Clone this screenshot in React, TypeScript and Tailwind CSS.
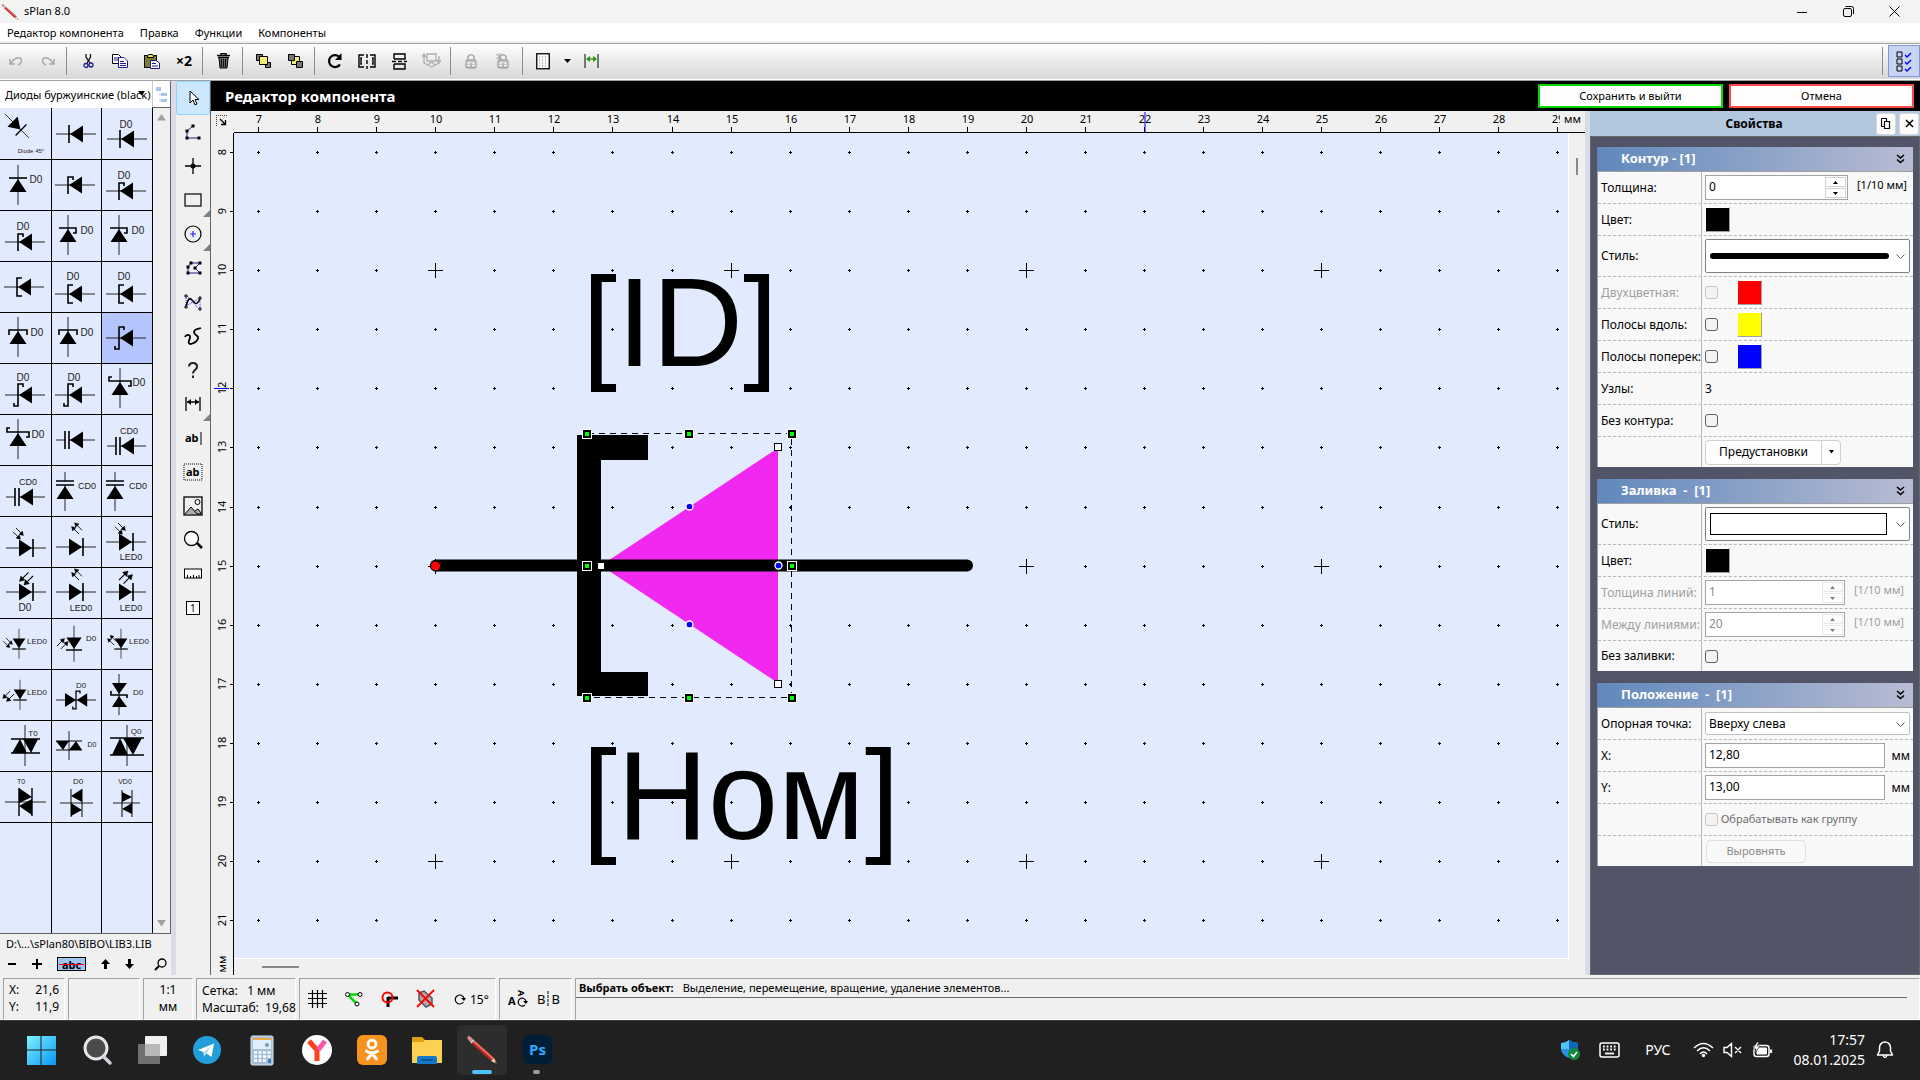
import React from "react";

type Kids = { children?: React.ReactNode };

/* ---------- component library symbols ---------- */

type Cathode = "bar" | "hook" | "bracket" | "schottky" | "cap";

const cathodes: Record<Cathode, string> = {
  bar: "M0 -9V9",
  hook: "M0 9V-8H5V-5",
  bracket: "M5 -9H0V9H5",
  schottky: "M5 -8V-11H0V11H-4V8",
  cap: "M0 -9V9M-4 -9V9",
};

function Diode({ x, y, r = 0, c = "bar", s = 1, lead = true }: { x: number; y: number; r?: number; c?: Cathode; s?: number; lead?: boolean }) {
  return (
    <g transform={`translate(${x} ${y}) rotate(${r}) scale(${s})`}>
      {lead && <path d={c === "cap" ? "M-13 0H-4M0 0H26" : "M-13 0H27"} stroke="#222" strokeWidth="1" />}
      <path d="M1 0L14 -8.5V8.5Z" fill="#000" />
      <path d={cathodes[c]} stroke="#000" strokeWidth="1.6" fill="none" />
    </g>
  );
}

function Rays({ x, y, r = 0, s = 1 }: { x: number; y: number; r?: number; s?: number }) {
  return (
    <g transform={`translate(${x} ${y}) rotate(${r}) scale(${s})`} stroke="#000" strokeWidth="1.2">
      <path d="M0 0L8 -8M5 4L13 -4" />
      <path d="M10 -10L8.5 -4L4 -8.500ZM15 -6L13.500 0L9 -4.500Z" fill="#000" strokeWidth=".5" />
    </g>
  );
}

function T({ x, y, children, s }: { x: number; y: number; s?: number } & Kids) {
  return (
    <text x={x} y={y} fontSize={s ?? (children === "D0" ? 10 : 9)} textAnchor="middle" className="font-['Liberation_Sans',Arial,sans-serif]" fill="#222">
      {children}
    </text>
  );
}

const library: React.ReactNode[] = [
  <><Diode x={21} y={21} r={225} s={0.85} /><T x={31} y={44} s={6}>Diode 45°</T></>,
  <Diode x={17} y={25} />,
  <><Diode x={18} y={30} /><T x={24} y={19}>D0</T></>,

  <><Diode x={18} y={18} r={90} /><T x={36} y={23}>D0</T></>,
  <Diode x={16} y={25} c="hook" />,
  <><Diode x={17} y={31} c="hook" /><T x={22} y={19}>D0</T></>,

  <><Diode x={18} y={31} c="hook" /><T x={23} y={19}>D0</T></>,
  <><Diode x={16} y={17} r={90} c="hook" /><T x={35} y={23}>D0</T></>,
  <><Diode x={17} y={17} r={90} c="hook" /><T x={36} y={23}>D0</T></>,

  <Diode x={17} y={25} c="bracket" />,
  <><Diode x={16} y={32} c="bracket" /><T x={21} y={18}>D0</T></>,
  <><Diode x={17} y={32} c="bracket" /><T x={22} y={18}>D0</T></>,

  <><Diode x={18} y={17} r={90} c="bracket" /><T x={37} y={23}>D0</T></>,
  <><Diode x={16} y={17} r={90} c="bracket" /><T x={35} y={23}>D0</T></>,
  <Diode x={17} y={25} c="schottky" />,

  <><Diode x={18} y={31} c="schottky" /><T x={23} y={17}>D0</T></>,
  <><Diode x={16} y={31} c="schottky" /><T x={22} y={17}>D0</T></>,
  <><Diode x={18} y={17} r={90} c="schottky" /><T x={37} y={22}>D0</T></>,

  <><Diode x={18} y={17} r={90} c="schottky" /><T x={38} y={23}>D0</T></>,
  <Diode x={17} y={25} c="cap" />,
  <><Diode x={18} y={31} c="cap" /><T x={27} y={19}>CD0</T></>,

  <><Diode x={19} y={31} c="cap" /><T x={28} y={19}>CD0</T></>,
  <><Diode x={13} y={19} r={90} c="cap" /><T x={35} y={23}>CD0</T></>,
  <><Diode x={13} y={19} r={90} c="cap" /><T x={36} y={23}>CD0</T></>,

  <><Diode x={33} y={31} r={180} /><Rays x={16} y={11} r={90} s={0.75} /></>,
  <><Diode x={31} y={30} r={180} /><Rays x={27} y={17} r={-90} s={0.75} /></>,
  <><Diode x={31} y={25} r={180} /><Rays x={16} y={6} r={90} s={0.75} /><T x={29} y={43}>LED0</T></>,

  <><Diode x={33} y={24} r={180} /><Rays x={33} y={8} r={180} s={0.9} /><T x={25} y={43}>D0</T></>,
  <><Diode x={31} y={24} r={180} /><Rays x={27} y={12} r={-90} s={0.75} /><T x={29} y={43}>LED0</T></>,
  <><Diode x={31} y={24} r={180} /><Rays x={17} y={12} s={0.9} /><T x={29} y={43}>LED0</T></>,

  <><Diode x={19} y={30} r={-90} s={0.75} /><Rays x={6} y={19} r={90} s={0.65} /><T x={37} y={25} s={8}>LED0</T></>,
  <><Diode x={22} y={31} r={-90} s={0.9} /><Rays x={5} y={27} s={0.75} /><T x={39} y={22} s={8}>D0</T></>,
  <><Diode x={19} y={30} r={-90} s={0.75} /><Rays x={12} y={26} r={-90} s={0.65} /><T x={37} y={25} s={8}>LED0</T></>,

  <><Diode x={20} y={30} r={-90} s={0.75} /><Rays x={14} y={24} r={180} s={0.75} /><T x={37} y={25} s={8}>LED0</T></>,
  <><path d="M4 30H44" stroke="#222" /><Diode x={24} y={30} s={0.8} lead={false} c="schottky" /><path d="M24 30L13 23V37Z" /><T x={29} y={18} s={8}>D0</T></>,
  <><path d="M17 4V45" stroke="#222" /><path d="M9 21V25H25V28" stroke="#000" strokeWidth="1.6" fill="none" /><path d="M10 13H25L17 24ZM10 37H25L17 26Z" /><T x={36} y={25} s={8}>D0</T></>,

  <><path d="M25 4V45" stroke="#222" /><path d="M11 18H40M11 32H40" stroke="#000" strokeWidth="1.4" /><path d="M12 32L20 18L27 32ZM23 18H38L31 32Z" /><T x={33} y={15} s={8}>T0</T></>,
  <><path d="M17 10V39" stroke="#222" /><path d="M4 20H30M4 29H30" stroke="#000" /><path d="M4 20H17L11 29ZM17 29L24 20L30 29Z" /><T x={40} y={26} s={7}>D0</T></>,
  <><path d="M25 4V45" stroke="#222" /><path d="M8 17H42M8 34H42" stroke="#000" strokeWidth="1.6" /><path d="M10 34L18 17L26 34ZM21 17H40L31 34Z" /><T x={34} y={13} s={8}>Q0</T></>,

  <><path d="M5 30H46" stroke="#222" /><path d="M19 16V44M32 16V44" stroke="#000" strokeWidth="1.4" /><path d="M19 16L32 25L19 31ZM32 27L19 34L32 43Z" /><T x={21} y={12} s={7}>T0</T></>,
  <><path d="M8 31H41" stroke="#222" /><path d="M19 17V45M30 17V45" stroke="#000" /><path d="M30 17L19 24L30 30ZM19 31L30 38L19 44Z" /><T x={26} y={12} s={8}>D0</T></>,
  <><path d="M11 31H38" stroke="#222" /><path d="M20 18V45M30 18V45" stroke="#000" /><path d="M20 20L30 25L20 30ZM30 31L20 37L30 42Z" /><T x={23} y={12} s={7}>VD0</T></>,
];

function LibraryPanel() {
  return (
    <aside className="flex w-[171px] shrink-0 flex-col bg-[#f0f0f0]">
      <div className="flex h-[27px] shrink-0 border-b border-r border-[#646464] bg-white">
        <div className="relative w-[153px] border-r border-[#c8c8c8]">
          <select aria-label="Библиотека" className="h-full w-full appearance-none overflow-hidden bg-white pl-[5px] text-[11px] whitespace-nowrap outline-none">
            <option>Диоды буржуинские (black)</option>
          </select>
          <svg className="pointer-events-none absolute top-[10px] left-[138px]" width="7" height="5"><path d="M0 0H7L3.500 4.500Z" /></svg>
        </div>
        <button aria-label="Дерево библиотек" className="flex flex-1 items-center justify-center">
          <svg width="11" height="15" fill="#a5c5ea"><path d="M0 0H5V4H0ZM5 6H11V9H5ZM5 12H11V15H5ZM2 4H3V14H5V13H3V8H5V7H3V4Z" /></svg>
        </button>
      </div>
      <div className="flex min-h-0 flex-1 border-r border-b border-[#646464]">
        <div className="grid w-[153px] grid-cols-[52px_50px_51px] grid-rows-[52px_repeat(13,51px)_1fr] bg-[#e2ebfd]">
          {library.map((sym, i) => (
            <button key={i} aria-label={`Компонент ${i + 1}`} className={`overflow-hidden border-r border-b border-black ${i === 14 ? "bg-[#b4c4fc]" : "bg-[#e2ebfd]"}`}>
              <svg width="50" height="50" className="block">{sym}</svg>
            </button>
          ))}
          <div className="border-r border-black" />
          <div className="border-r border-black" />
          <div className="border-r border-black" />
        </div>
        <div className="flex flex-1 flex-col items-center justify-between pt-[6px] pb-[6px]">
          <svg width="9" height="7" fill="#a0a0a0"><path d="M0 6.500H9L4.500 0Z" /></svg>
          <svg width="9" height="7" fill="#a0a0a0"><path d="M0 0H9L4.500 6.500Z" /></svg>
        </div>
      </div>
      <div className="h-[20px] shrink-0 pl-[6px] text-[11px] leading-[20px] whitespace-nowrap">D:\...\sPlan80\BIBO\LIB3.LIB</div>
      <div className="flex h-[21px] shrink-0 items-center gap-[15px] pr-[4px] pb-px pl-[7px]">
        <button aria-label="Удалить"><svg width="10" height="10"><path d="M1 5H9" stroke="#000" strokeWidth="2" /></svg></button>
        <button aria-label="Добавить"><svg width="10" height="10"><path d="M0 5H10M5 0V10" stroke="#000" strokeWidth="2" /></svg></button>
        <button className="relative h-[14px] w-[29px] border border-black bg-[#a0c4f0] text-[11px] leading-[11px] font-bold">
          abc
          <span className="absolute top-[6px] left-px h-px w-[25px] bg-red-600" />
        </button>
        <button aria-label="Вверх"><svg width="9" height="10"><path d="M4.500 0L9 5H6V10H3V5H0Z" /></svg></button>
        <button aria-label="Вниз"><svg width="9" height="10"><path d="M4.500 10L9 5H6V0H3V5H0Z" /></svg></button>
        <button aria-label="Поиск" className="ml-auto"><svg width="13" height="13" fill="none" stroke="#000"><circle cx="8" cy="5" r="4" strokeWidth="1.300" /><path d="M5 8L1 12" strokeWidth="2" /></svg></button>
      </div>
    </aside>
  );
}

/* ---------- top bars ---------- */

function Pencil({ size }: { size: number }) {
  return (
    <svg width={size} height={size} viewBox="0 0 32 32">
      <path d="M1 4L3 1.500L7 5L4 8Z" fill="#d88a8a" />
      <path d="M4 8L7 5L9 7L6 10Z" fill="#c8c8c8" />
      <path d="M5.500 9.500L8.500 6.500L28 24L25 27Z" fill="#b02824" />
      <path d="M7 8L8.500 6.500L28 24L26.500 25.500Z" fill="#ec6a5c" />
      <path d="M25 27L28 24L31 30Z" fill="#f0d0a0" />
      <path d="M29 28.500L30 27.500L31 30Z" fill="#222" />
    </svg>
  );
}

function TitleBar() {
  return (
    <header className="flex h-[23px] shrink-0 items-center bg-[#f3f3f3] pr-[3px] pl-px">
      <Pencil size={18} />
      <span className="ml-[5px] text-[11px]">sPlan 8.0</span>
      <div className="ml-auto flex h-full items-center">
        <button aria-label="Свернуть" className="flex h-full w-[46px] items-center justify-center"><svg width="10" height="10"><path d="M0 5.500H10" stroke="#000" /></svg></button>
        <button aria-label="Развернуть" className="flex h-full w-[46px] items-center justify-center"><svg width="11" height="11" fill="none" stroke="#000"><rect x=".5" y="2.500" width="8" height="8" rx="1.500" /><path d="M2.500 .5H8.500A2 2 0 0 1 10.500 2.500V8" /></svg></button>
        <button aria-label="Закрыть" className="flex h-full w-[46px] items-center justify-center"><svg width="11" height="11"><path d="M.5 .5L10.500 10.500M10.500 .5L.5 10.500" stroke="#000" /></svg></button>
      </div>
    </header>
  );
}

function MenuBar() {
  return (
    <nav className="flex h-[20px] shrink-0 items-start gap-[16px] border-b-2 border-[#efefef] bg-white pl-[7px] text-[11px] leading-[19px]">
      <button>Редактор компонента</button>
      <button>Правка</button>
      <button>Функции</button>
      <button>Компоненты</button>
    </nav>
  );
}

function Tool({ w = 32, label, children }: { w?: number; label: string } & Kids) {
  return (
    <button aria-label={label} title={label} className="flex h-[28px] shrink-0 items-center justify-center" style={{ width: w }}>
      {children}
    </button>
  );
}
const Sep = () => <span className="h-[28px] w-px shrink-0 bg-[#8c8c8c]" />;

function Toolbar() {
  return (
    <div className="flex h-[38px] shrink-0 items-center border-t border-b border-[#a0a0a0] bg-linear-to-b from-white to-[#d6d6d6] pb-[2px] shadow-[0_-1px_0_#fff_inset]">
      <Tool label="Отменить"><svg width="14" height="10" fill="none" stroke="#a8a8a8" strokeWidth="1.500"><path d="M1 3V8H6M1 8L5 3.500Q8 .5 12 2.500Q14 6 9 9" /></svg></Tool>
      <Tool label="Повторить"><svg width="14" height="10" fill="none" stroke="#a8a8a8" strokeWidth="1.500"><path d="M13 3V8H8M13 8L9 3.500Q6 .5 2 2.500Q0 6 5 9" /></svg></Tool>
      <span className="w-[2px]" />
      <Sep />
      <span className="w-[5px]" />
      <Tool label="Вырезать"><svg width="11" height="15" fill="none"><path d="M3 0V3L7 9M7.500 0V3L4 9" stroke="#000" strokeWidth="1.200" /><circle cx="3" cy="11.500" r="2" stroke="#1c1c90" strokeWidth="1.300" /><circle cx="8" cy="11" r="2" stroke="#1c1c90" strokeWidth="1.300" /></svg></Tool>
      <Tool label="Копировать"><svg width="16" height="14" strokeWidth="1"><path d="M.5 .5H6.500L9.500 3.500V9.500H.5Z" fill="#fff" stroke="#000" /><path d="M2 4H7M2 6H7" stroke="#1c1c90" /><path d="M6.500 3.500H12L15.500 7V13.500H6.500Z" fill="#fff" stroke="#1c1c90" /><path d="M8 7.500H12M8 9.500H14M8 11.500H14" stroke="#1c1c90" /></svg></Tool>
      <Tool label="Вставить"><svg width="16" height="15"><rect x=".5" y="1.500" width="12" height="12" fill="#807a30" stroke="#000" /><path d="M3.500 3.500V1.500L5 .5H8L9.500 1.500V3.500Z" fill="#e8e060" stroke="#000" /><path d="M6.500 6.500H12L15.500 9V14.500H6.500Z" fill="#fff" stroke="#1c1c90" /><path d="M8 9.500H12M8 12H14" stroke="#1c1c90" /></svg></Tool>
      <Tool label="Дублировать"><span className="text-[14px] leading-[20px] font-bold">×2</span></Tool>
      <span className="w-[2px]" />
      <Sep />
      <span className="w-[4px]" />
      <Tool label="Удалить"><svg width="13" height="16" fill="none" stroke="#000"><path d="M4 2V.5H9V2M0 2.500H13M1 4.500H12" strokeWidth="1.400" /><path d="M2 5L3 15H10L11 5" fill="#666" /><path d="M4.500 6V14M6.500 6V14M8.500 6V14" stroke="#111" /></svg></Tool>
      <span className="w-[3px]" />
      <Sep />
      <span className="w-[5px]" />
      <Tool label="На передний план"><svg width="16" height="15" stroke="#000"><path d="M.5 .5H6.500V6.500H.5ZM9.500 8.500H14.500V13.500H9.500Z" fill="#777" /><path d="M3.500 2.500H11.500V10.500H3.500Z" fill="#f6ee70" /></svg></Tool>
      <Tool label="На задний план"><svg width="16" height="15" stroke="#000"><path d="M3.500 2.500H11.500V10.500H3.500Z" fill="#f6ee70" /><path d="M.5 .5H6.500V6.500H.5ZM8.500 7.500H14.500V13.500H8.500Z" fill="#777" /></svg></Tool>
      <span className="w-[2px]" />
      <Sep />
      <span className="w-[4px]" />
      <Tool label="Повернуть"><svg width="16" height="16" fill="none"><path d="M12 3.500A6 6 0 1 0 13 11.500" stroke="#000" strokeWidth="2.200" /><path d="M14.500 0V7H8Z" fill="#000" /></svg></Tool>
      <Tool label="Отразить по горизонтали"><svg width="18" height="15" fill="none" stroke="#000" strokeWidth="1.400"><path d="M6 1H1V13H6M4 4H3V10H4M12 1H17V13H12M14 4H15V10H14" /><path d="M9 0V15" strokeDasharray="4 2" /></svg></Tool>
      <Tool label="Отразить по вертикали"><svg width="15" height="17" fill="none" stroke="#000" strokeWidth="1.400"><path d="M2 6V1H13V6H2M2 11V16H13V11H2" /><path d="M0 8.500H15" strokeDasharray="4 2" /></svg></Tool>
      <Tool label="Выровнять"><svg width="19" height="16" fill="none" stroke="#b0b0b0" strokeWidth="1.400"><path d="M5 1H14V8H5ZM2 10L9.500 14L17 10M2 3V10M0 4L2 1L4 4M17 3V9M15 7L17 10L19 7M6 12L9.500 9L13 12" /></svg></Tool>
      <span className="w-[3px]" />
      <Sep />
      <span className="w-[4px]" />
      {["Заблокировать", "Разблокировать"].map((l, i) => (
        <Tool key={l} label={l}>
          <svg width="15" height="17" fill="none" stroke="#a8a8a8">
            <path d="M4 7V3.500Q7 0 10 3.500V7" strokeWidth="1.600" />
            <rect x="2" y="7" width="10" height="8" rx="2" fill="#c4c4c4" strokeWidth="1.400" />
            <path d="M3 10H11M3 12.500H11" stroke="#fff" />
            <path d="M7 10V14" strokeWidth="1.500" />
            {i === 1 && <path d="M0 1L6 6M6 1L0 6M3 0V7" />}
          </svg>
        </Tool>
      ))}
      <span className="w-[3px]" />
      <Sep />
      <span className="w-[4px]" />
      <Tool label="Сетка"><svg width="14" height="17"><rect x=".75" y=".75" width="12.500" height="15" fill="#fff" stroke="#000" strokeWidth="1.300" /><path d="M3 4H12M3 7H12M3 10H12M3 13H12" stroke="#777" strokeDasharray="1 2" /></svg></Tool>
      <Tool w={17} label="Параметры сетки"><svg width="7" height="4"><path d="M0 0H7L3.500 4Z" /></svg></Tool>
      <Tool w={30} label="Размеры"><svg width="15" height="14"><path d="M1 0V14M14 0V14" stroke="#000" /><path d="M3 5H12" stroke="#d00" /><path d="M2 5L6 2V8ZM13 5L9 2V8Z" fill="#0a0" /></svg></Tool>
      <span className="ml-auto" />
      <Sep />
      <button aria-label="Панель свойств" className="ml-[5px] flex h-[32px] w-[32px] items-center justify-center border border-[#7898e0] bg-[#c8d4f0]">
        <svg width="16" height="21" fill="none"><path d="M1 1H6V6H1ZM1 8H6V13H1ZM1 15H6V20H1Z" stroke="#000" /><path d="M9 4L11 6L15 2M9 11L11 13L15 9M9 18L11 20L15 16" stroke="#00f" strokeWidth="1.400" /></svg>
      </button>
    </div>
  );
}

/* ---------- drawing tools ---------- */

const nodeSquares = (pts: [number, number][]) => pts.map(([x, y], i) => <rect key={i} x={x - 1.5} y={y - 1.5} width="3" height="3" fill="#000" />);

const tools: { label: string; more?: boolean; icon: React.ReactNode }[] = [
  { label: "Выбор", icon: <path d="M7 3V15L10 12L12 17L14 16L12 11.500H16Z" fill="#fff" stroke="#000" /> },
  { label: "Линия", icon: <><path d="M3 16H17M10 4L4 9V16" stroke="#1c1c90" fill="none" />{nodeSquares([[10, 4], [4, 9], [4, 16], [16, 16]])}</> },
  { label: "Узел", icon: <><path d="M2 10H18M10 2V18" stroke="#000" strokeWidth="1.300" /><circle cx="10" cy="10" r="2.500" /></> },
  { label: "Прямоугольник", more: true, icon: <rect x="2" y="4" width="16" height="12" fill="none" stroke="#000" strokeWidth="1.200" /> },
  { label: "Окружность", more: true, icon: <><circle cx="10" cy="10" r="8" fill="none" stroke="#000" strokeWidth="1.200" /><path d="M7 10H13M10 7V13" stroke="#22f" strokeWidth="1.200" /></> },
  { label: "Многоугольник", icon: <><path d="M8 5H17L12 10L17 15H5V9Z" stroke="#1c1c90" fill="none" />{nodeSquares([[8, 5], [17, 5], [12, 10], [17, 15], [5, 15], [5, 9]])}</> },
  { label: "Безье", icon: <><path d="M3 4V14L17 6V17M4 4L16 17" stroke="#22f" strokeDasharray="1 1" fill="none" /><path d="M3 15Q5 5 8 7L12 11Q14 13 17 7" stroke="#000" fill="none" strokeWidth="1.600" /><path d="M2 3H4V5H2ZM2 14H4V16H2ZM16 5H18V7H16ZM16 16H18V18H16Z" fill="#fff" stroke="#000" /></> },
  { label: "Свободная линия", icon: <path d="M2 11C3 8 8 8 7 12C5 16 5 18 8 18C12 17 16 14 15 11C14 9 11 9 11 6C11 3 15 3 18 2" fill="none" stroke="#000" strokeWidth="1.800" /> },
  { label: "Спецформа", icon: <path d="M6 6.500Q6 3 10 3Q14 3 14 6.500Q14 8.500 12 10Q10 11.500 10 13.500M10 15.500V18" stroke="#222" strokeWidth="2" fill="none" /> },
  { label: "Размер", more: true, icon: <><path d="M3 3V17M17 3V17M4 8H16" stroke="#000" strokeWidth="1.300" /><path d="M4 8L8 5V11ZM16 8L12 5V11Z" /></> },
  { label: "Текст", icon: <><text x="2" y="14" fontSize="11" fontWeight="700">ab</text><path d="M18 4V17" stroke="#000" /></> },
  { label: "Текстовый блок", icon: <><rect x="1" y="2" width="18" height="16" fill="none" stroke="#000" strokeDasharray="1 1" /><text x="3" y="14" fontSize="11" fontWeight="700">ab</text></> },
  { label: "Изображение", icon: <><rect x="1" y="1" width="18" height="18" fill="none" stroke="#000" strokeWidth="1.300" /><circle cx="14.500" cy="6" r="2.500" fill="none" stroke="#000" /><path d="M2 18L8 11L14 18M12 15L15 13L18 17V18H14" fill="#aaa" stroke="#000" /></> },
  { label: "Масштаб", icon: <><circle cx="8.500" cy="8.500" r="7" fill="#fff" stroke="#000" strokeWidth="1.300" /><path d="M14 13L19 18" stroke="#000" strokeWidth="2.500" /></> },
  { label: "Линейка", icon: <><rect x="1.500" y="5" width="17" height="9" fill="#fff" stroke="#000" /><path d="M4.500 14V11M7.500 14V12M10.500 14V11M13.500 14V12M16 14V11" stroke="#000" /></> },
  { label: "Страница", icon: <><rect x="3.500" y="3.500" width="13" height="13" fill="#fff" stroke="#000" /><text x="7" y="14" fontSize="10">1</text></> },
];

function ToolBox() {
  return (
    <div className="flex w-[35px] shrink-0 flex-col border-r border-[#646464] bg-[#f0f0f0]">
      {tools.map((t, i) => (
        <button key={t.label} aria-label={t.label} className={`relative flex h-[34px] shrink-0 items-center justify-center ${i === 0 ? "rounded-xs border border-[#99d1ff] bg-[#cce8ff]" : ""}`}>
          <svg width="20" height="20" viewBox="0 0 20 20">{t.icon}</svg>
          {t.more && <svg className="absolute right-0 bottom-0" width="7" height="7"><path d="M7 0V7H0Z" fill="#808080" /></svg>}
        </button>
      ))}
    </div>
  );
}

/* ---------- rulers and canvas ---------- */

const PITCH = 59.06;
const gx = (n: number) => Math.floor(24.6 + PITCH * (n - 7));
const gy = (n: number) => Math.floor(19.65 + PITCH * (n - 8));
const xs = Array.from({ length: 23 }, (_, i) => i + 7);
const ys = Array.from({ length: 14 }, (_, i) => i + 8);

function TopRuler() {
  return (
    <div className="flex h-[22px] shrink-0">
      <div className="w-[23px] shrink-0">
        <svg width="23" height="21" fill="none" stroke="#000"><path d="M5 4.500H17M5.500 6V16" strokeDasharray="1 1" stroke="#444" /><path d="M9 8L14 13M14.500 9V13.500H10" strokeWidth="1.300" /></svg>
      </div>
      <div className="flex min-w-0 flex-1 border-b border-black">
        <svg className="block h-full min-w-0 flex-1" fontSize="11">
          {xs.map((n) => (
            <React.Fragment key={n}>
              <path d={`M${gx(n) + 0.5} 16V22`} stroke="#000" />
              <text x={gx(n) + 1} y="12" textAnchor="middle">{n}</text>
            </React.Fragment>
          ))}
          <path d="M911 1V21" stroke="#00f" />
        </svg>
        <span className="w-[25px] shrink-0 pl-[4px] text-[11px] leading-[16px]">мм</span>
      </div>
    </div>
  );
}

function LeftRuler() {
  return (
    <div className="w-[23px] shrink-0 border-r border-black">
      <svg className="block h-full w-full" fontSize="11">
        {ys.map((n) => (
          <React.Fragment key={n}>
            <path d={`M19 ${gy(n) + 0.5}H23`} stroke="#000" />
            <text transform={`translate(15 ${gy(n)}) rotate(-90)`} textAnchor="middle">{n}</text>
          </React.Fragment>
        ))}
        <path d="M3 255.500H18" stroke="#00f" />
        <text transform="translate(15 831) rotate(-90)" textAnchor="middle">мм</text>
      </svg>
    </div>
  );
}

const grips: [number, number][] = [[353, 301], [455, 301], [558, 301], [353, 433], [558, 433], [353, 565], [455, 565], [558, 565]];
const vertices: [number, number][] = [[544, 314], [544, 551], [367, 433]];
const midpoints: [number, number][] = [[455, 373], [455, 491], [544, 432]];

function Canvas() {
  return (
    <svg className="block h-full w-full bg-[#e2ebfd]">
      <g className="font-['Liberation_Sans',Arial,sans-serif]" fontSize="126">
        <text x="348" y="233">[ID]</text>
        <text x="348" y="706">[Ном]</text>
      </g>
      <g stroke="#000" shapeRendering="crispEdges">
        {xs.map((n) =>
          ys.map((m) => {
            const big = n % 5 === 0 && m % 5 === 0;
            const r = big ? 7 : 1;
            const x = gx(n) + 0.5;
            const y = gy(m) + 0.5;
            return <path key={`${n}-${m}`} d={`M${x - r - 0.5} ${y}H${x + r + 0.5}M${x} ${y - r - 0.5}V${y + r + 0.5}`} />;
          }),
        )}
      </g>
      <path d="M367 432.500L544 315V550Z" fill="#f028f0" />
      <path d="M343 302H414V327H367V539H414V563H343Z" />
      <path d="M202 432.500H733" stroke="#000" strokeWidth="12" strokeLinecap="round" />
      <circle cx="201.500" cy="433" r="5" fill="#f00" stroke="#000" />
      <rect x="353.500" y="300.500" width="204" height="264" fill="none" stroke="#000" strokeDasharray="6 5" shapeRendering="crispEdges" />
      {grips.map(([x, y]) => (
        <g key={`${x}-${y}`} shapeRendering="crispEdges">
          <rect x={x - 5} y={y - 5} width="10" height="10" fill="#fff" />
          <rect x={x - 4} y={y - 4} width="8" height="8" />
          <rect x={x - 2} y={y - 2} width="4" height="4" fill="#0f0" />
        </g>
      ))}
      {vertices.map(([x, y]) => (
        <g key={`${x}-${y}`} shapeRendering="crispEdges">
          <rect x={x - 4} y={y - 4} width="8" height="8" />
          <rect x={x - 3} y={y - 3} width="6" height="6" fill="#fff" />
        </g>
      ))}
      {midpoints.map(([x, y]) => <circle key={`${x}-${y}`} cx={x + 0.5} cy={y + 0.5} r="3.500" fill="#00f" stroke="#fff" strokeWidth="1.300" />)}
    </svg>
  );
}

function Editor() {
  return (
    <main className="flex min-w-0 flex-1 flex-col bg-[#f0f0f0]">
      <TopRuler />
      <div className="flex min-h-0 flex-1">
        <LeftRuler />
        <div className="flex min-w-0 flex-1 flex-col">
          <div className="flex min-h-0 flex-1">
            <div className="min-w-0 flex-1 overflow-hidden border-r border-b border-white"><Canvas /></div>
            <div className="w-[16px] shrink-0 pt-[25px] pl-[7px]"><div className="h-[17px] w-[2px] bg-[#888]" /></div>
          </div>
          <div className="h-[16px] shrink-0 pt-[7px] pl-[28px]"><div className="h-[2px] w-[37px] bg-[#888]" /></div>
        </div>
      </div>
    </main>
  );
}

/* ---------- properties ---------- */

function Section({ title, children }: { title: string } & Kids) {
  return (
    <section className="bg-[#f8f8f8]">
      <h3 className="flex h-[24px] items-center justify-between bg-linear-to-r from-[#6088bc] to-[#b8bcd2] pr-[8px] pl-[24px] text-[13px] font-bold whitespace-pre text-white">
        {title}
        <button aria-label="Свернуть раздел">
          <svg width="9" height="10" fill="none" stroke="#000" strokeWidth="1.600"><path d="M1 1L4.500 4L8 1M1 5.500L4.500 8.500L8 5.500" /></svg>
        </button>
      </h3>
      <div className="border-t border-l border-[#a0a0a0]">{children}</div>
    </section>
  );
}

function Row({ label, id, off, last, h = "h-[32px]", children }: { label?: string; id?: string; off?: boolean; last?: boolean; h?: string } & Kids) {
  return (
    <div className={`flex ${h} ${last ? "" : "border-b border-dashed border-[#b8b8b8]"}`}>
      <div className="flex w-[104px] shrink-0 items-center border-r border-[#b8b8b8] pl-[3px]">
        <label htmlFor={id} className={`text-[12px] whitespace-nowrap ${off ? "text-[#a0a0a0]" : ""}`}>{label}</label>
      </div>
      <div className="flex min-w-0 flex-1 items-center pr-[3px] pl-[3px]">{children}</div>
    </div>
  );
}

function Check({ id, disabled }: { id: string; disabled?: boolean }) {
  return <input id={id} type="checkbox" disabled={disabled} className="h-[13px] w-[13px] shrink-0 appearance-none rounded-[3px] border border-[#606060] bg-[#f3f3f3] disabled:border-[#c6c6c6]" />;
}

const Swatch = ({ color, label, left }: { color: string; label: string; left?: boolean }) => (
  <button aria-label={label} className={`h-[25px] w-[25px] shrink-0 border-t border-l border-r border-b border-t-white border-l-white border-r-[#a0a0a0] border-b-[#a0a0a0] ${color} ${left ? "ml-[19px]" : ""}`} />
);

function Spin({ id, value, disabled }: { id: string; value: string; disabled?: boolean }) {
  const btn = "flex h-[10px] w-[21px] items-center justify-center border border-[#d0d0d0] bg-[#fdfdfd]";
  return (
    <>
      <div className="flex h-[25px] min-w-0 flex-1 items-center border border-[#a4a4a8] bg-white pr-px">
        <input id={id} defaultValue={value} disabled={disabled} className={`h-full min-w-0 flex-1 bg-transparent pb-[3px] pl-[3px] text-[12px] outline-none ${disabled ? "text-[#8c8c8c]" : ""}`} />
        <div className={`flex flex-col gap-px ${disabled ? "opacity-50" : ""}`}>
          <button aria-label="Больше" className={btn}><svg width="5" height="3"><path d="M0 3H5L2.500 0Z" /></svg></button>
          <button aria-label="Меньше" className={btn}><svg width="5" height="3"><path d="M0 0H5L2.500 3Z" /></svg></button>
        </div>
      </div>
      <span className={`shrink-0 pb-[4px] pl-[9px] text-[11px] whitespace-nowrap ${disabled ? "w-[65px] text-[#a0a0a0]" : "w-[62px]"}`}>[1/10 мм]</span>
    </>
  );
}

const Chevron = () => (
  <svg className="pointer-events-none absolute top-1/2 right-[5px] -mt-[2px]" width="9" height="6" fill="none" stroke="#606060"><path d="M.5 .5L4.500 4.500L8.500 .5" /></svg>
);

function StyleSelect({ id, text, children }: { id: string; text: string } & Kids) {
  return (
    <div className="relative flex-1">
      <select id={id} className="block h-[34px] w-full appearance-none rounded-xs border border-[#808080] bg-white pl-[4px] text-[12px] text-transparent"><option>{text}</option></select>
      <div className="pointer-events-none absolute inset-y-0 right-[21px] left-[5px] flex items-center">{children}</div>
      <Chevron />
    </div>
  );
}

function Properties() {
  const headBtn = "flex h-[22px] w-[20px] items-center justify-center rounded-[3px] border border-[#d8d8d8] bg-[#fdfdfd]";
  const field = "h-[25px] min-w-0 flex-1 border border-[#a4a4a8] bg-white pb-[3px] pl-[3px] text-[12px] outline-none";
  return (
    <aside className="flex w-[330px] shrink-0 flex-col">
      <div className="flex h-[25px] shrink-0 items-center bg-[#b3c7df] pr-px">
        <h2 className="flex-1 pl-[42px] text-center text-[12px] font-bold">Свойства</h2>
        <div className="flex gap-[3px]">
          <button aria-label="Открепить" className={headBtn}><svg width="10" height="12" fill="none" stroke="#000"><path d="M.5 .5H5.500V3.500M3.500 8.500H.5V.5M3.500 3.500H8.500V10.500H3.500Z" strokeWidth="1.200" /></svg></button>
          <button aria-label="Закрыть панель" className={headBtn}><svg width="9" height="9"><path d="M1 1L8 8M8 1L1 8" stroke="#000" strokeWidth="1.500" /></svg></button>
        </div>
      </div>
      <div className="flex min-h-0 flex-1 flex-col gap-[12px] border border-[#686868] bg-[#525467] pt-[10px] pr-[6px] pl-[6px]">
        <Section title="Контур - [1]">
          <Row label="Толщина:" id="thick"><Spin id="thick" value="0" /></Row>
          <Row label="Цвет:"><Swatch color="bg-black" label="Цвет контура" /></Row>
          <Row label="Стиль:" id="lstyle" h="h-[41px]"><StyleSelect id="lstyle" text="Сплошная"><span className="h-[6px] w-full rounded-full bg-black" /></StyleSelect></Row>
          <Row label="Двухцветная:" id="two" off><Check id="two" disabled /><Swatch color="bg-[#ff0000]" label="Второй цвет" left /></Row>
          <Row label="Полосы вдоль:" id="along"><Check id="along" /><Swatch color="bg-[#ffff00]" label="Цвет вдоль" left /></Row>
          <Row label="Полосы поперек:" id="across"><Check id="across" /><Swatch color="bg-[#0000ff]" label="Цвет поперек" left /></Row>
          <Row label="Узлы:"><span className="text-[12px]">3</span></Row>
          <Row label="Без контура:" id="nol"><Check id="nol" /></Row>
          <Row last h="h-[30px]">
            <button className="h-[25px] w-[117px] rounded-l-[4px] border border-[#d0d0d0] bg-[#fdfdfd] text-[12px]">Предустановки</button>
            <button aria-label="Список предустановок" className="-ml-px flex h-[25px] w-[20px] items-center justify-center rounded-r-[4px] border border-[#d0d0d0] bg-[#fdfdfd]"><svg width="5" height="4"><path d="M0 0H5L2.500 3.500Z" /></svg></button>
          </Row>
        </Section>
        <Section title="Заливка  -  [1]">
          <Row label="Стиль:" id="fstyle" h="h-[41px]"><StyleSelect id="fstyle" text="Сплошная"><span className="mr-[2px] h-[22px] w-full border border-black bg-white" /></StyleSelect></Row>
          <Row label="Цвет:"><Swatch color="bg-black" label="Цвет заливки" /></Row>
          <Row label="Толщина линий:" id="lt" off><Spin id="lt" value="1" disabled /></Row>
          <Row label="Между линиями:" id="lg" off><Spin id="lg" value="20" disabled /></Row>
          <Row label="Без заливки:" id="nof" last h="h-[30px]"><Check id="nof" /></Row>
        </Section>
        <Section title="Положение  -  [1]">
          <Row label="Опорная точка:" id="anchor">
            <div className="relative flex-1">
              <select id="anchor" className="block h-[23px] w-full appearance-none rounded-xs border border-[#c0c0c0] bg-white pl-[3px] text-[12px]"><option>Вверху слева</option></select>
              <Chevron />
            </div>
          </Row>
          <Row label="X:" id="px"><input id="px" className={field} defaultValue="12,80" /><span className="pl-[7px] text-[12px]">мм</span></Row>
          <Row label="Y:" id="py"><input id="py" className={field} defaultValue="13,00" /><span className="pl-[7px] text-[12px]">мм</span></Row>
          <Row><Check id="grp" disabled /><label htmlFor="grp" className="pl-[3px] text-[11px] text-[#6d6d6d]">Обрабатывать как группу</label></Row>
          <Row last h="h-[30px]"><button disabled className="ml-px h-[23px] w-[100px] rounded-[4px] border border-[#e0e0e0] bg-[#f8f8f8] text-[11px] text-[#8c8c8c]">Выровнять</button></Row>
        </Section>
      </div>
    </aside>
  );
}

/* ---------- status bar ---------- */

function Cell({ className, children }: { className: string } & Kids) {
  return <div className={`h-[42px] shrink-0 border-t border-l border-r border-b border-t-[#a0a0a0] border-l-[#a0a0a0] border-r-white border-b-white leading-[17px] ${className}`}>{children}</div>;
}

function StatusBar() {
  const ib = "flex h-[28px] w-[36px] items-center justify-center";
  return (
    <footer className="flex h-[45px] shrink-0 items-start gap-[3px] bg-[#f0f0f0] pt-[3px] pl-[3px] text-[12px]">
      <Cell className="w-[62px] px-[5px] py-[2px]">
        <div className="flex justify-between"><span>X:</span><span>21,6</span></div>
        <div className="flex justify-between"><span>Y:</span><span>11,9</span></div>
      </Cell>
      <Cell className="w-[72px]" />
      <Cell className="w-[50px] py-[2px] text-center"><div>1:1</div><div>мм</div></Cell>
      <Cell className="w-[100px] py-[3px] pl-[5px] whitespace-pre"><div>Сетка:   1 мм</div><div>Масштаб:  19,68</div></Cell>
      <Cell className="flex w-[197px] items-center">
        <button aria-label="Сетка" className={ib}><svg width="20" height="20"><path d="M4.500 1V19M9.500 1V19M14.500 1V19M0 4.500H19M0 9.500H19M0 14.500H19" stroke="#000" strokeWidth="1.200" /></svg></button>
        <button aria-label="Резиновые линии" className={ib}><svg width="18" height="15"><path d="M4 2.500H14M4 4L11 11" stroke="#0d0" strokeWidth="2.500" /><g fill="#fff" stroke="#000"><circle cx="2.500" cy="2.500" r="2" /><circle cx="15" cy="2.500" r="2" /><circle cx="12" cy="12" r="2" /></g></svg></button>
        <button aria-label="Захват узлов" className={ib}><svg width="18" height="17"><path d="M7 7H17M7 6V16" stroke="#000" strokeWidth="3" /><circle cx="6.500" cy="6.500" r="5" fill="none" stroke="#f00" strokeWidth="2" /></svg></button>
        <button aria-label="Привязка выключена" className={ib}><svg width="20" height="20" fill="none"><path d="M3 4L8 2L16 9V15L10 18L3 11Z" fill="#aaa" stroke="#555" strokeWidth="1.500" /><path d="M1 1L18 18M18 1L1 18" stroke="#f00" strokeWidth="1.800" /></svg></button>
        <button className="flex items-center gap-[4px] pl-[10px]"><svg width="12" height="12" fill="none"><path d="M9.500 9A4.500 4.500 0 1 1 10 5" stroke="#000" strokeWidth="1.200" /><path d="M7 5H12L10 8Z" fill="#000" /></svg>15°</button>
      </Cell>
      <Cell className="flex w-[73px] items-center">
        <button aria-label="Поворот текста" className={ib}>
          <svg width="22" height="20" fontSize="11" fontWeight="700"><text x="1" y="16">A</text><text transform="translate(11 1) rotate(90)" fontSize="9">A</text><path d="M18 16A4 4 0 1 1 19 12" fill="none" stroke="#000" strokeWidth="1.200" /><path d="M16 12H21L19 15Z" /></svg>
        </button>
        <button className="flex items-center gap-[2px] pl-px text-[13px]">B<svg width="2" height="16"><path d="M1 0V16" stroke="#000" strokeDasharray="3 1" /></svg>B</button>
      </Cell>
      <Cell className="min-w-0 flex-1 text-[11px]">
        <div className="mr-[12px] flex h-[19px] gap-[9px] border-b border-[#686868] pl-[3px] leading-[18px]">
          <b>Выбрать объект:</b><span>Выделение, перемещение, вращение, удаление элементов...</span>
        </div>
      </Cell>
    </footer>
  );
}

/* ---------- taskbar ---------- */

const apps: { name: string; state?: "active" | "open"; icon: React.ReactNode }[] = [
  { name: "Пуск", icon: <><defs><linearGradient id="win" x1="0" y1="0" x2="1" y2="1"><stop offset="0" stopColor="#7cf4fc" /><stop offset="1" stopColor="#0a94f8" /></linearGradient></defs><path d="M1 2H14.500V15.500H1ZM15.500 2H30V15.500H15.500ZM1 16.500H14.500V31H1ZM15.500 16.500H30V31H15.500Z" fill="url(#win)" /></> },
  { name: "Поиск", icon: <><circle cx="15" cy="14" r="11" fill="#4a4a4a" stroke="#e4e8ea" strokeWidth="3" /><path d="M23 23L29 29" stroke="#d0d4d8" strokeWidth="3.500" strokeLinecap="round" /></> },
  { name: "Представление задач", icon: <><rect x="9" y="2" width="22" height="20" rx="1" fill="#f0f0f0" /><rect x="2" y="10" width="22" height="20" rx="1" fill="#707070" /><path d="M9 10H24V22H9Z" fill="#b8b8b8" /></> },
  { name: "Telegram", icon: <><circle cx="16" cy="16" r="14" fill="#229ed9" /><path d="M7 16L23 9.500L20.500 23L15.500 19.500L13 22L12.500 18Z" fill="#fff" /><path d="M12.500 18L20 12L15.500 19.500L13 22Z" fill="#b8dcf0" /></> },
  { name: "Калькулятор", icon: <><rect x="5" y="2" width="22" height="29" rx="1.500" fill="#a4bfd6" stroke="#d8e8f4" /><rect x="7" y="4" width="18" height="11" fill="#e0eefa" /><path d="M7 5H25" stroke="#f0a848" strokeWidth="2" /><circle cx="21" cy="11" r="2" fill="#6a9cc8" /><path d="M8 18.500H25M8 22.500H25M8 26.500H20" stroke="#fff" strokeWidth="2.500" strokeDasharray="3 1.500" /><rect x="22" y="25" width="3" height="4" fill="#3a80b8" /></> },
  { name: "Яндекс", icon: <><circle cx="16" cy="16" r="15" fill="#fff" /><path d="M8 7L16 16V27" fill="none" stroke="#fc3f1d" strokeWidth="5" /><path d="M17 16L24 7" stroke="#f858a8" strokeWidth="5" /></> },
  { name: "Одноклассники", icon: <><rect x="1" y="1" width="30" height="30" rx="6" fill="#f7931e" /><circle cx="16" cy="10" r="4" fill="none" stroke="#fff" strokeWidth="2.800" /><path d="M10.500 17Q16 21 21.500 17M16 19.500L11.500 25M16 19.500L20.500 25" fill="none" stroke="#fff" strokeWidth="3" strokeLinecap="round" /></> },
  { name: "Проводник", icon: <><path d="M1 4Q1 3 2 3H11L14 6H24V12H1Z" fill="#e0a010" /><path d="M1 8H12L14 6H31V29H1Z" fill="#fcd050" /><path d="M6 30V24Q6 22 8 22H24Q26 22 26 24V30Z" fill="#1478c8" /><path d="M10 26H22" stroke="#0a5090" strokeWidth="1.500" /></> },
  { name: "sPlan", state: "active", icon: null },
  { name: "Photoshop", state: "open", icon: <><rect x="2" y="1" width="29" height="29" rx="5" fill="#001e36" /><text x="16.500" y="20.500" textAnchor="middle" fontSize="15" fontWeight="700" fill="#31a8ff">Ps</text></> },
];

function Taskbar() {
  return (
    <footer className="flex h-[60px] shrink-0 items-center border-t border-[#404040] bg-[#202020] pr-[26px] pb-[2px] pl-[14px] text-white">
      {apps.map((a) => (
        <button key={a.name} aria-label={a.name} className="flex h-[50px] w-[55px] items-center justify-center">
          <span className={`relative flex h-[50px] w-[50px] items-center justify-center rounded-[5px] ${a.state === "active" ? "bg-[#2d2d2d]" : ""}`}>
            {a.icon ? <svg width="32" height="32" viewBox="0 0 32 32">{a.icon}</svg> : <Pencil size={32} />}
            {a.state === "active" && <i className="absolute bottom-px h-[4px] w-[20px] rounded-full bg-[#4cc2ff]" />}
            {a.state === "open" && <i className="absolute bottom-px h-[4px] w-[7px] rounded-full bg-[#9a9a9a]" />}
          </span>
        </button>
      ))}
      <div className="ml-auto flex items-center">
        <button aria-label="Безопасность" className="mr-[19px]"><svg width="20" height="20"><path d="M1 3Q6 3 9 0Q13 3 18 3V10Q17 15 9 18Q2 15 1 10Z" fill="#2a90e0" /><path d="M9 0Q13 3 18 3V9H9Z" fill="#1268b8" /><path d="M1 9H9V0Q6 3 1 3Z" fill="#50c4f8" /><circle cx="14" cy="14" r="6" fill="#10893e" /><path d="M11 14L13.500 16.500L17 12" stroke="#fff" fill="none" strokeWidth="1.600" /></svg></button>
        <button aria-label="Клавиатура" className="mr-[25px]"><svg width="21" height="16" fill="none" stroke="#fff"><rect x="1" y="1" width="19" height="14" rx="2" strokeWidth="1.500" /><path d="M4 4.500H17M4 7.500H17" strokeWidth="1.800" strokeDasharray="1.800 1.800" /><path d="M6 11.500H15" strokeWidth="1.800" /></svg></button>
        <button className="mr-[23px] text-[14px]">РУС</button>
        <button aria-label="Сеть, звук и батарея" className="mr-[20px] flex items-center gap-[9px]">
          <svg width="21" height="16" fill="none" stroke="#fff" strokeWidth="1.500"><path d="M1 6Q10.500 -3 20 6M4 9Q10.500 2.500 17 9M7 12Q10.500 8 14 12" /><circle cx="10.500" cy="13.500" r="1.700" fill="#fff" stroke="none" /></svg>
          <svg width="20" height="16" fill="none" stroke="#fff" strokeWidth="1.400"><path d="M1 5.500H4L8.500 1.500V14.500L4 10.500H1ZM12 5L18 11M18 5L12 11" /></svg>
          <svg width="21" height="18" fill="none" stroke="#fff"><rect x="2" y="4.500" width="15" height="11" rx="2.500" strokeWidth="1.500" /><path d="M5 7H14.500V13H5Z" fill="#fff" /><path d="M19 8.500V12" strokeWidth="2.200" /><path d="M5 1L1 8H4L3 12L8 5H5L7 1Z" fill="#fff" stroke="#202020" strokeWidth=".6" /></svg>
        </button>
        <time className="text-right text-[14px] leading-[20px]">17:57<br />08.01.2025</time>
        <button aria-label="Уведомления" className="ml-[11px]"><svg width="18" height="20" fill="none" stroke="#fff" strokeWidth="1.500"><path d="M1.500 15H16.500L14.500 11V7.500A5.500 5.500 0 0 0 3.500 7.500V11ZM7 15.500Q9 19.500 11 15.500" strokeLinejoin="round" /></svg></button>
      </div>
    </footer>
  );
}

export default function App() {
  return (
    <div className="flex h-screen flex-col overflow-hidden bg-[#f0f0f0] font-['Noto_Sans','Open_Sans',sans-serif] text-black">
      <TitleBar />
      <MenuBar />
      <Toolbar />
      <div className="flex min-h-0 flex-1">
        <LibraryPanel />
        <div className="w-[5px] shrink-0 bg-[#d8dce8]" />
        <ToolBox />
        <div className="flex min-w-0 flex-1 flex-col">
          <div className="flex h-[30px] shrink-0 items-center gap-[6px] bg-black pr-[6px] pl-[14px]">
            <h1 className="mr-auto text-[15px] font-bold text-white">Редактор компонента</h1>
            <button className="h-[24px] w-[185px] rounded-[1px] border-2 border-[#00d800] bg-[#fdfdfd] text-[11px]">Сохранить и выйти</button>
            <button className="h-[24px] w-[185px] rounded-[1px] border-2 border-[#ff4848] bg-[#fdfdfd] text-[11px]">Отмена</button>
          </div>
          <div className="flex min-h-0 flex-1">
            <Editor />
            <div className="w-[5px] shrink-0 bg-[#d8dce8]" />
            <Properties />
          </div>
        </div>
      </div>
      <StatusBar />
      <Taskbar />
    </div>
  );
}
